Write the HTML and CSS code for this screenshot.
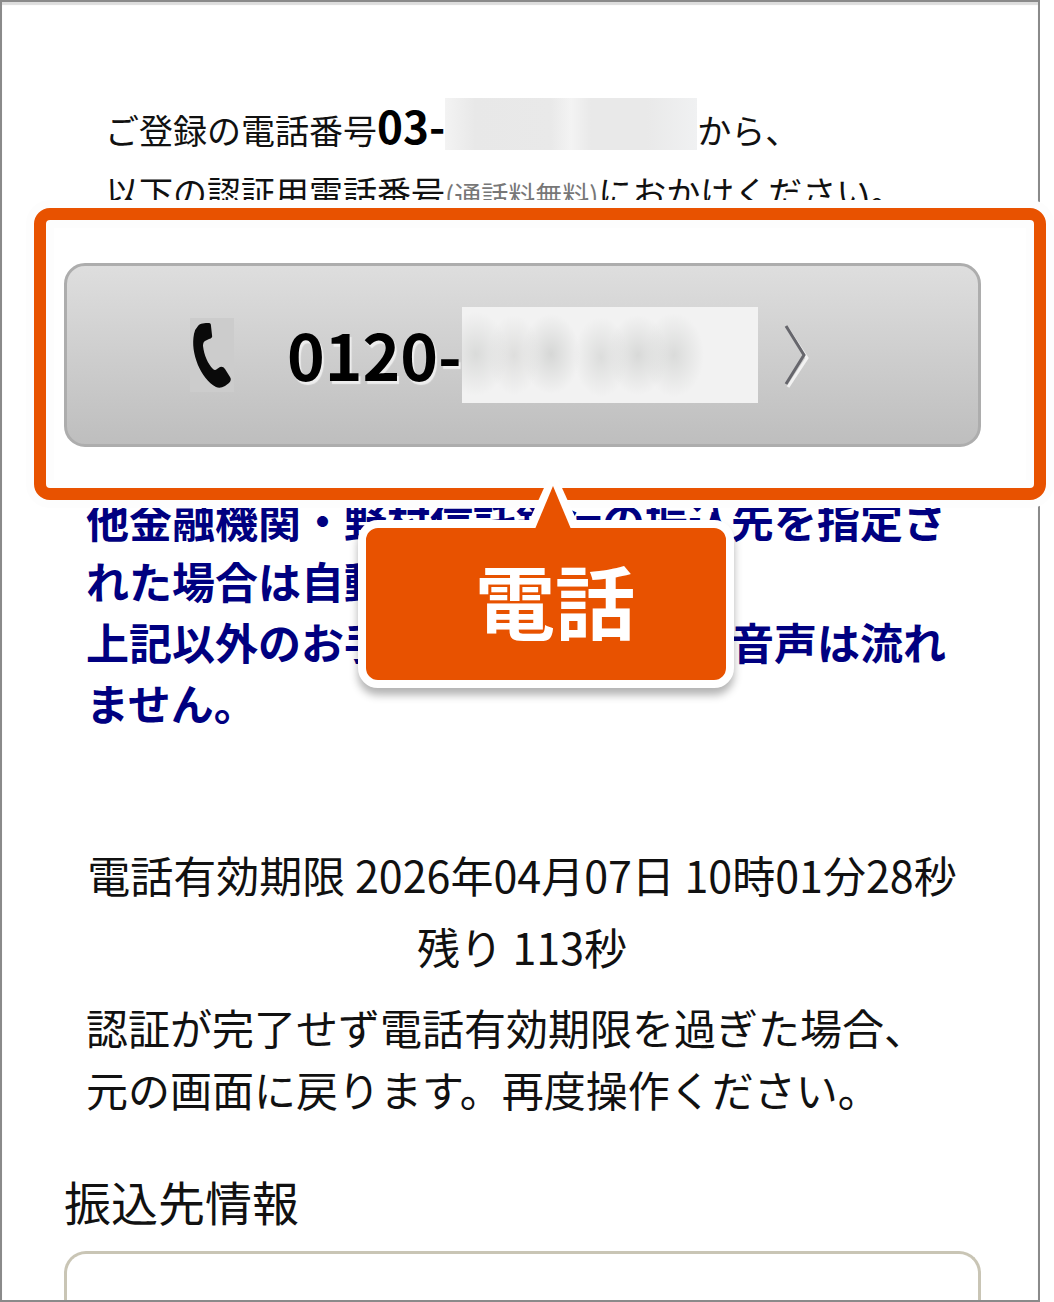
FILE: index.html
```html
<!DOCTYPE html>
<html lang="ja">

<head>
    <meta charset="UTF-8">
    <meta name="viewport" content="width=device-width, initial-scale=1.0">
    <title>電話認証</title>
    <link rel="stylesheet" href="styles.css">
</head>

<body>
    <main class="screen">
        <p class="intro">
            ご登録の電話番号<strong class="own-number">03-</strong><span class="mask mask-small"></span>から、<br>
            以下の認証用電話番号<small class="toll-free">(通話料無料)</small>におかけください。
        </p>

        <!-- Highlighted call button -->
        <section class="highlight">
            <button type="button" class="call-button">
                <svg class="phone-icon" viewBox="0 0 44 74" aria-hidden="true">
                    <path d="M8 8C10 5 15 5 19 5Q21 5 21 8L22 17Q23 20 19 21L15 23Q13 24 13 28C14 37 18 46 23 51Q25 53 27 51L30 49Q33 48 35 51L40 59Q42 62 39 65L35 68Q30 71 26 69C11 61 0 35 4 16Q5 11 8 8Z"/>
                </svg>
                <span class="call-number">0120-</span>
                <span class="mask mask-large"></span>
                <svg class="chevron" viewBox="0 0 28 66" aria-hidden="true">
                    <path class="chevron-light" d="M5 7L24 36L5 65"/>
                    <path d="M3 4L21 33L3 62"/>
                </svg>
            </button>

            <div class="callout">
                <svg class="callout-arrow" viewBox="0 0 50 62" aria-hidden="true">
                    <path class="arrow-edge" d="M25 1L49 54V60H1V54Z"/>
                    <path class="arrow-fill" d="M25 19L43 62H7Z"/>
                </svg>
                <span>電話</span>
            </div>
        </section>

        <p class="notice">
            他金融機関・野村信託銀行の振込先を指定さ<br>
            れた場合は自動音声が流れます。<br>
            上記以外のお手続きの場合は自動音声は流れ<br>
            ません。
        </p>

        <p class="expiry">
            電話有効期限 2026年04月07日 10時01分28秒<br>
            残り 113秒
        </p>

        <p class="timeout">
            認証が完了せず電話有効期限を過ぎた場合、<br>
            元の画面に戻ります。再度操作ください。
        </p>

        <h2>振込先情報</h2>
        <div class="transfer-card"></div>
    </main>
</body>

</html>
```

FILE: styles.css
```css
* {
    box-sizing: border-box;
}

body {
    margin: 0;
    background-color: #fff;
    color: #111;
    font-family: "Noto Sans CJK JP", sans-serif;
    font-size: 43px;
}

p, h2 {
    margin: 0;
    white-space: nowrap;
}

.screen {
    display: flex;
    flex-direction: column;
    min-height: 100vh;
    margin-right: 14px;
    border: 2px solid #8a8a8a;
    box-shadow: inset 0 3px 1px #ddd;
}

.intro {
    padding: 96px 0 0 103px;
    font-size: 34px;
    line-height: 62px;
}

.own-number {
    color: #000;
    font-size: 44px;
    line-height: 1;
}

.toll-free {
    color: #777;
    font-size: 27px;
    line-height: 1;
}

/* Blurred out digits */
.mask {
    display: inline-block;
}

.mask-small {
    width: 252px;
    height: 52px;
    vertical-align: -6px;
    background: linear-gradient(90deg, #f3f3f3, #e8e8e8 12%, #e9e9e9 42%, #f3f3f3 50%, #e9e9e9 58%, #e9e9e9 80%, #f0f1f2);
}

.mask-large {
    width: 296px;
    height: 96px;
    background:
        radial-gradient(closest-side, #dadbda, transparent) -18px 45% / 64px 84px no-repeat,
        radial-gradient(closest-side, #dededd, transparent) 26px 50% / 52px 80px no-repeat,
        radial-gradient(closest-side, #d6d7d6, transparent) 60px 45% / 58px 80px no-repeat,
        radial-gradient(closest-side, #dcdddc, transparent) 112px 60% / 54px 80px no-repeat,
        radial-gradient(closest-side, #d8d9d8, transparent) 146px 50% / 60px 80px no-repeat,
        radial-gradient(closest-side, #dadbda, transparent) 182px 50% / 60px 84px no-repeat,
        #f2f2f2;
}

.highlight {
    position: relative;
    z-index: 1;
    margin: -15px -8px 0 32px;
    padding: 43px 53px 41px 18px;
    border: 12px solid #e85200;
    border-radius: 16px;
    background-color: #fff;
    box-shadow: 0 0 0 8px #fdfdfd, inset 0 0 0 8px #fdfdfd;
}

.call-button {
    display: flex;
    align-items: center;
    width: 100%;
    height: 184px;
    padding: 0 0 0 123px;
    border: 3px solid #adadad;
    border-radius: 21px;
    background: linear-gradient(#dedede, #bebebe);
    color: #000;
    font-family: inherit;
    font-size: 64px;
    font-weight: bold;
    cursor: pointer;
}

.phone-icon {
    width: 44px;
    height: 74px;
    margin-right: 53px;
    background-color: #cccccc;
    fill: #0a0a0a;
}

.call-number {
    padding-bottom: 4px;
    text-shadow: 2px 3px 1px #eee;
}

.chevron {
    width: 28px;
    height: 66px;
    margin-left: 25px;
    fill: none;
    stroke: #66666c;
    stroke-width: 3;
}

.chevron-light {
    stroke: #f2f2f2;
}

.callout {
    position: absolute;
    top: 300px;
    left: 50%;
    width: 376px;
    margin-left: -182px;
    padding: 10px 0 22px 18px;
    border: 8px solid #fff;
    border-radius: 20px;
    background-color: #e85200;
    box-shadow: 0 7px 8px rgba(0, 0, 0, 0.3);
    color: #fff;
    font-size: 80px;
    font-weight: bold;
    line-height: 120px;
    text-align: center;
}

.callout-arrow {
    position: absolute;
    top: -61px;
    left: 162px;
    width: 50px;
    height: 62px;
}

.arrow-edge {
    fill: #fff;
}

.arrow-fill {
    fill: #e85200;
}

.notice {
    margin-top: -11px;
    padding-left: 84px;
    color: #000080;
    font-weight: bold;
    line-height: 61px;
}

.expiry {
    margin-top: 105px;
    padding-left: 4px;
    line-height: 72px;
    text-align: center;
}

.timeout {
    margin-top: 14px;
    padding-left: 84px;
    font-size: 42px;
    line-height: 62px;
}

h2 {
    margin-top: 51px;
    padding-left: 62px;
    font-size: 47px;
    font-weight: normal;
    line-height: 60px;
}

.transfer-card {
    flex: 1;
    min-height: 48px;
    margin: 20px 57px 0 62px;
    border: 3px solid #c9c5b5;
    border-bottom: none;
    border-radius: 22px 22px 0 0;
}
```
